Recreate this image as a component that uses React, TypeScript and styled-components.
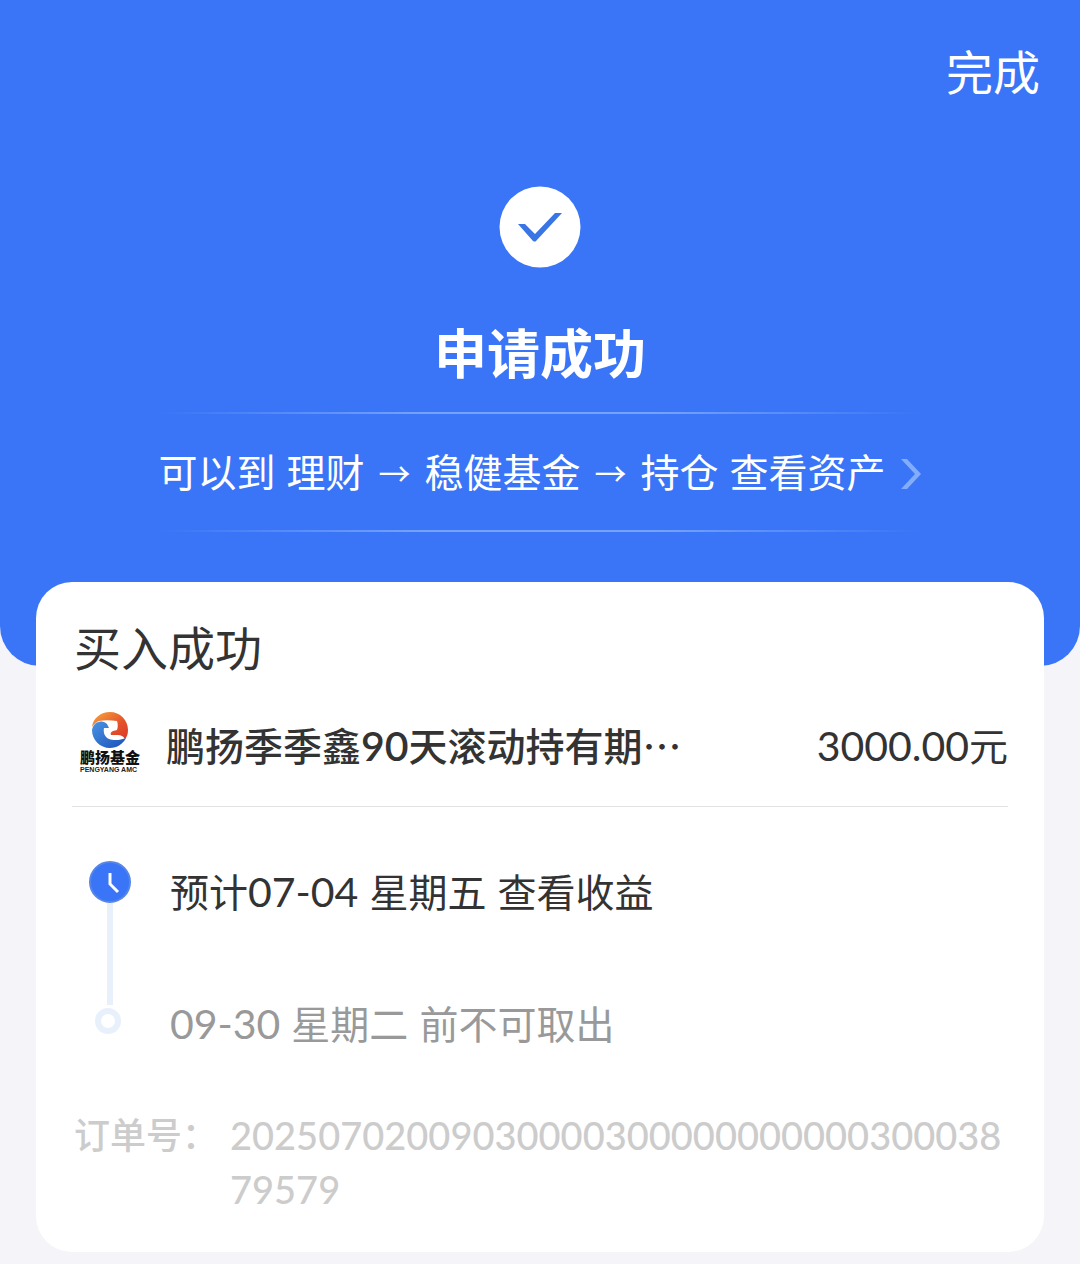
import React from "react";
import styled, { createGlobalStyle } from "styled-components";

const cjk = `"Noto Sans CJK SC", sans-serif`;

const GlobalStyle = createGlobalStyle`
  * { box-sizing: border-box; }
  body { margin: 0; background: #f4f4f9; font-family: Lato, ${cjk}; color: #333; }
  h1, h2, p, ol, dl, dd, dt { margin: 0; padding: 0; font-weight: 400; }
  button { border: 0; padding: 0; background: none; font: inherit; color: inherit; cursor: pointer; }
`;

const Page = styled.main`
  padding-bottom: 12px;
`;

const Hero = styled.header`
  display: flex;
  flex-direction: column;
  align-items: center;
  padding: 38px 40px 134px;
  border-radius: 0 0 40px 40px;
  background: #3975f6;
  color: #fff;
`;

const DoneButton = styled.button`
  align-self: flex-end;
  font-size: 47px;
  line-height: 68px;
`;

const CheckBadge = styled.svg`
  width: 82px;
  height: 82px;
  margin-top: 80px;
`;

const HeroTitle = styled.h1`
  margin: 50px 0 22px;
  font-size: 53px;
  line-height: 72px;
  font-weight: 700;
`;

const Rule = styled.hr`
  width: 760px;
  max-width: 100%;
  height: 2px;
  margin: 0;
  border: 0;
  background: linear-gradient(90deg, transparent, #76a3fa 35%, #76a3fa 65%, transparent);
`;

const HoldingsLink = styled.a`
  display: flex;
  align-items: center;
  gap: 14px;
  padding: 28px 0;
  color: inherit;
  text-decoration: none;
  font-size: 39px;
  line-height: 60px;
`;

const Phrase = styled.span`
  display: flex;
  gap: 11px;
`;

const Arrow = styled.span`
  padding: 0 3px;
  font-family: ${cjk};
  font-size: 32px;
`;

const Chevron = styled.svg`
  width: 22px;
  height: 32px;
  margin-top: 4px;
`;

const Card = styled.section`
  position: relative;
  margin: -84px 36px 0;
  padding: 32px 36px 36px;
  border-radius: 36px;
  background: #fff;
`;

const CardTitle = styled.h2`
  padding-left: 2px;
  font-size: 47px;
  line-height: 68px;
`;

const FundRow = styled.div`
  display: flex;
  align-items: flex-start;
  margin-top: 20px;
  padding: 8px 0 24px;
  border-bottom: 1px solid #e3e3e3;
  font-size: 39px;
  line-height: 72px;
`;

const FundLogo = styled.svg`
  flex: none;
  width: 76px;
  height: 64px;
`;

const FundName = styled.p`
  flex: 1;
  margin-left: 18px;
  font-weight: 500;
`;

const Digits = styled.span<{ $strong?: boolean }>`
  font-size: 41px;
  font-weight: ${(p) => (p.$strong ? 600 : "inherit")};
`;

const Timeline = styled.ol`
  list-style: none;
  display: grid;
  grid-template-columns: 76px 1fr;
  column-gap: 22px;
  margin-top: 53px;
`;

const Step = styled.li<{ $muted?: boolean }>`
  display: contents;
  color: ${(p) => (p.$muted ? "#999" : "#333")};
  font-size: 39px;
  line-height: 64px;
`;

const Marker = styled.svg`
  width: 76px;
  height: 100%;
`;

const StepText = styled.p<{ $tall?: boolean }>`
  display: flex;
  gap: 11px;
  height: ${(p) => (p.$tall ? "132px" : "64px")};
`;

const Order = styled.dl`
  display: flex;
  margin-top: 52px;
  padding-left: 2px;
  color: #ccc;
  line-height: 54px;
`;

const OrderLabel = styled.dt`
  flex: none;
  width: 156px;
  font-size: 36px;
  font-weight: 500;
`;

const OrderNumber = styled.dd`
  flex: 1;
  min-width: 0;
  font-size: 38px;
  font-weight: 500;
  overflow-wrap: anywhere;
`;

export default function App() {
  return (
    <Page>
      <GlobalStyle />
      <Hero>
        <DoneButton type="button">完成</DoneButton>
        <CheckBadge viewBox="0 0 82 82" aria-hidden="true">
          <circle cx="41" cy="41" r="40.5" fill="#fff" />
          <path d="M19 38h7l10 10 20-21h7L37 55q-1 1-3 0Z" fill="#3975e4" />
        </CheckBadge>
        <HeroTitle>申请成功</HeroTitle>
        <Rule />
        <HoldingsLink href="#holdings">
          <Phrase>
            <span>可以到</span>
            <span>理财</span>
            <Arrow>→</Arrow>
            <span>稳健基金</span>
            <Arrow>→</Arrow>
            <span>持仓</span>
            <span>查看资产</span>
          </Phrase>
          <Chevron viewBox="0 0 22 32" aria-hidden="true">
            <path d="M1 1h6l14 15L7 31H1l14-15Z" fill="#83adfb" />
          </Chevron>
        </HoldingsLink>
        <Rule />
      </Hero>
      <Card>
        <CardTitle>买入成功</CardTitle>
        <FundRow>
          <FundLogo viewBox="0 0 76 64" role="img" aria-label="鹏扬基金">
            <defs>
              <linearGradient id="warm" x1="0" y1="0" x2="1" y2="1">
                <stop offset="0" stopColor="#f7a83e" />
                <stop offset="0.6" stopColor="#e4522c" />
                <stop offset="1" stopColor="#d93a26" />
              </linearGradient>
              <linearGradient id="cool" x1="0" y1="0" x2="1" y2="1">
                <stop offset="0" stopColor="#4a94e4" />
                <stop offset="1" stopColor="#1a50b8" />
              </linearGradient>
            </defs>
            <path d="M20 17C21 8 29 2 38 2c10 0 18 8 18 18 0 4-1 7-3 9-2-3-4-4-7-4l-7 0c-1-2 0-3 2-4l4-1c1-3 1-6 0-9-7-1-13-1-18 0-3 1-5 3-7 6Z" fill="url(#warm)" />
            <path d="M20 20c1-5 4-8 7-8 3-1 6 0 8 2l2 4-5 0c-1 5 1 9 5 11 5 2 12 1 17-1-3 6-9 10-16 10-10 0-18-8-18-18Z" fill="url(#cool)" />
            <text x="8" y="53" fontSize="15" fontWeight="900" fontFamily="Noto Sans CJK SC, sans-serif" fill="#111">鹏扬基金</text>
            <text x="8" y="62" fontSize="7" fontWeight="700" fontFamily="Liberation Sans, sans-serif" fill="#222">PENGYANG AMC</text>
          </FundLogo>
          <FundName>
            鹏扬季季鑫<Digits $strong>90</Digits>天滚动持有期⋯
          </FundName>
          <span>
            <Digits>3000.00</Digits>元
          </span>
        </FundRow>
        <Timeline>
          <Step>
            <Marker viewBox="0 0 76 132" aria-hidden="true">
              <path d="M38 40v92" stroke="#e8f0fc" strokeWidth="6" />
              <circle cx="38" cy="22" r="20" fill="#3975f6" stroke="#5586e8" strokeWidth="2" />
              <path d="M38 13v11l8 8" fill="none" stroke="#fff" strokeWidth="3" />
            </Marker>
            <StepText $tall>
              <span>
                预计<Digits>07-04</Digits>
              </span>
              <span>星期五</span>
              <span>查看收益</span>
            </StepText>
          </Step>
          <Step $muted>
            <Marker viewBox="0 0 76 64" aria-hidden="true">
              <path d="M38 0v13" stroke="#e8f0fc" strokeWidth="6" />
              <circle cx="36" cy="29" r="10" fill="#fff" stroke="#e8f0fc" strokeWidth="6" />
            </Marker>
            <StepText>
              <Digits>09-30</Digits>
              <span>星期二</span>
              <span>前不可取出</span>
            </StepText>
          </Step>
        </Timeline>
        <Order>
          <OrderLabel>订单号：</OrderLabel>
          <OrderNumber>2025070200903000030000000000030003879579</OrderNumber>
        </Order>
      </Card>
    </Page>
  );
}
